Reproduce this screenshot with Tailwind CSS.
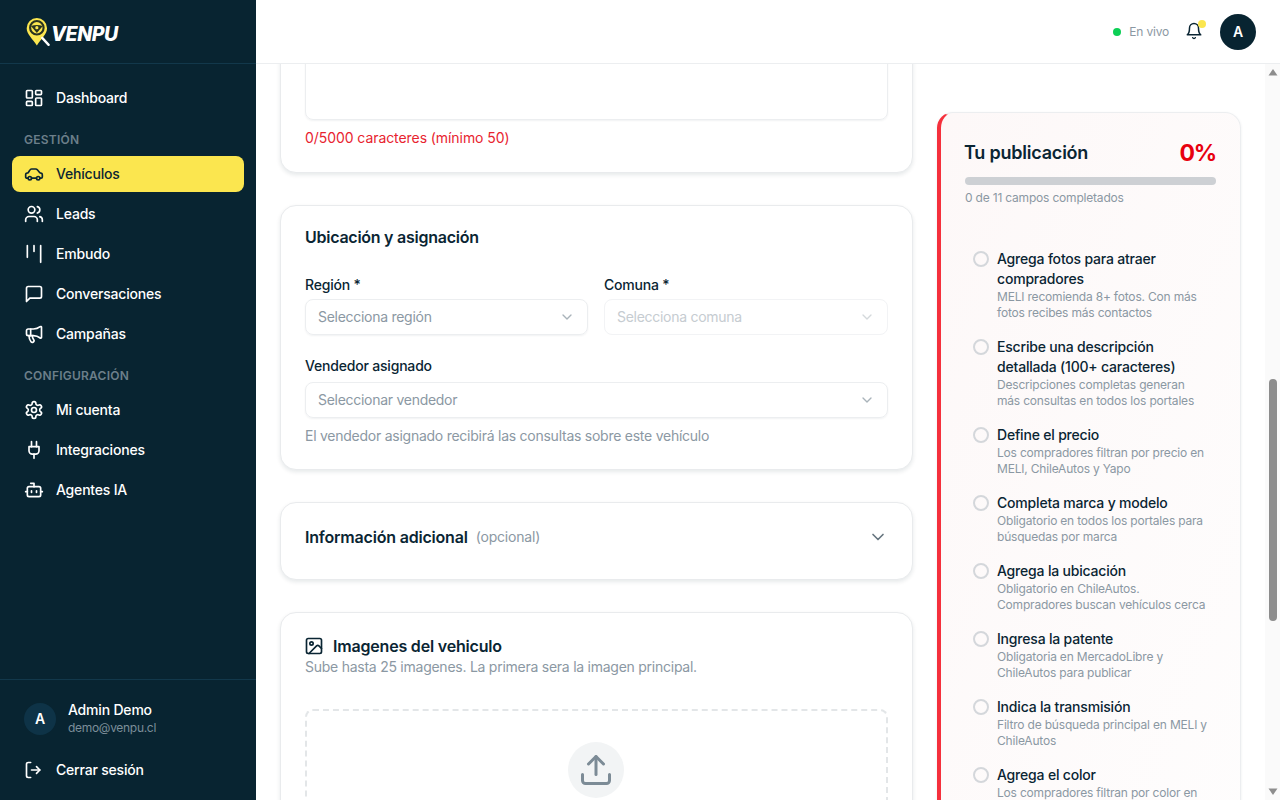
<!DOCTYPE html>
<html lang="es">

<head>
  <meta charset="UTF-8">
  <meta name="viewport" content="width=device-width, initial-scale=1.0">
  <title>Venpu - Nuevo vehiculo</title>
  <script src="https://cdn.jsdelivr.net/npm/@tailwindcss/browser@4"></script>
</head>

<body>
  <div class="flex h-[800px] w-[1280px] overflow-hidden bg-white font-['Inter',sans-serif] tracking-[-0.012em] text-[#0a2533]">

    <!-- sidebar -->
    <aside class="flex h-full w-64 shrink-0 flex-col bg-[#082431] text-white">
      <div class="flex h-16 shrink-0 items-center border-b border-[#12384b] pl-[26px]">
        <svg class="mt-[1px] h-[30px] w-[26px]" viewBox="0 0 24 28" fill="none">
          <path d="M10 1a9.500 9.500 0 0 1 9.500 9.500c0 5.500-5.500 10-9.500 16C6 20.500 .5 16 .5 10.500A9.500 9.500 0 0 1 10 1z" fill="#fbe64f" />
          <circle cx="10" cy="10" r="6.300" stroke="#2a3320" stroke-width="2" />
          <path d="M4.500 8.500c3.500-1.300 7.500-1.300 11 0L10 15z" fill="#2a3320" />
          <circle cx="10" cy="10" r="1.500" fill="#fbe64f" />
          <path d="M15 19.500l6 6.500" stroke="#fff" stroke-width="2.200" stroke-linecap="round" />
        </svg>
        <span class="mt-[7px] -ml-[1px] text-[19.5px] font-extrabold italic leading-none tracking-[-0.02em] text-white">VENPU</span>
      </div>

      <nav class="flex flex-1 flex-col px-3 pt-4 text-sm font-medium">
        <a class="flex h-9 items-center gap-3 rounded-lg px-3">
          <svg class="h-5 w-5" viewBox="0 0 24 24" fill="none" stroke="currentColor" stroke-width="2" stroke-linecap="round" stroke-linejoin="round"><rect x="3" y="3" width="7" height="9" rx="1" /><rect x="14" y="3" width="7" height="5" rx="1" /><rect x="14" y="12" width="7" height="9" rx="1" /><rect x="3" y="16" width="7" height="5" rx="1" /></svg>
          Dashboard
        </a>

        <p class="mt-4 mb-2 px-3 text-xs leading-4 font-semibold tracking-[0.02em] text-[#6c7f8a]">GESTIÓN</p>
        <div class="flex flex-col gap-1">
          <a class="flex h-9 items-center gap-3 rounded-lg bg-[#fbe64f] px-3 text-[#0a2533]">
            <svg class="h-5 w-5" viewBox="0 0 24 24" fill="none" stroke="currentColor" stroke-width="2" stroke-linecap="round" stroke-linejoin="round"><circle cx="7" cy="17" r="2" /><circle cx="17" cy="17" r="2" /><path d="M5 17H3.500C2.700 17 2 16.300 2 15.500v-3c0-.8.6-1.400 1.300-1.500L5 10.500l2-3.200C7.400 6.500 8.200 6 9 6h5c.8 0 1.500.3 2 .9l3 3.600 1.500.4c.9.2 1.500 1 1.500 1.900v2.700c0 .8-.7 1.500-1.500 1.500H19M9 17h6" /></svg>
            Vehículos
          </a>
          <a class="flex h-9 items-center gap-3 rounded-lg px-3">
            <svg class="h-5 w-5" viewBox="0 0 24 24" fill="none" stroke="currentColor" stroke-width="2" stroke-linecap="round" stroke-linejoin="round"><path d="M16 21v-2a4 4 0 0 0-4-4H6a4 4 0 0 0-4 4v2" /><circle cx="9" cy="7" r="4" /><path d="M22 21v-2a4 4 0 0 0-3-3.870" /><path d="M16 3.130a4 4 0 0 1 0 7.750" /></svg>
            Leads
          </a>
          <a class="flex h-9 items-center gap-3 rounded-lg px-3">
            <svg class="h-5 w-5" viewBox="0 0 24 24" fill="none" stroke="currentColor" stroke-width="2" stroke-linecap="round" stroke-linejoin="round"><path d="M4 2v14" /><path d="M12 2v7" /><path d="M20 2v20" /></svg>
            Embudo
          </a>
          <a class="flex h-9 items-center gap-3 rounded-lg px-3">
            <svg class="h-5 w-5" viewBox="0 0 24 24" fill="none" stroke="currentColor" stroke-width="2" stroke-linecap="round" stroke-linejoin="round"><path d="M21 15a2 2 0 0 1-2 2H7l-4 4V5a2 2 0 0 1 2-2h14a2 2 0 0 1 2 2z" /></svg>
            Conversaciones
          </a>
          <a class="flex h-9 items-center gap-3 rounded-lg px-3">
            <svg class="h-5 w-5" viewBox="0 0 24 24" fill="none" stroke="currentColor" stroke-width="2" stroke-linecap="round" stroke-linejoin="round"><path d="M11 6a13 13 0 0 0 8.400-2.800A1 1 0 0 1 21 4v12a1 1 0 0 1-1.600.8A13 13 0 0 0 11 14H5a2 2 0 0 1-2-2V8a2 2 0 0 1 2-2z" /><path d="M6 14a12 12 0 0 0 2.400 7.200 2 2 0 0 0 3.200-2.400A8 8 0 0 1 10 14" /><path d="M8 6v8" /></svg>
            Campañas
          </a>
        </div>

        <p class="mt-4 mb-2 px-3 text-xs leading-4 font-semibold tracking-[0.02em] text-[#6c7f8a]">CONFIGURACIÓN</p>
        <div class="flex flex-col gap-1">
          <a class="flex h-9 items-center gap-3 rounded-lg px-3">
            <svg class="h-5 w-5" viewBox="0 0 24 24" fill="none" stroke="currentColor" stroke-width="2" stroke-linecap="round" stroke-linejoin="round"><path d="M12.220 2h-.44a2 2 0 0 0-2 2v.18a2 2 0 0 1-1 1.730l-.43.25a2 2 0 0 1-2 0l-.15-.08a2 2 0 0 0-2.730.73l-.22.38a2 2 0 0 0 .73 2.730l.15.1a2 2 0 0 1 1 1.720v.51a2 2 0 0 1-1 1.740l-.15.09a2 2 0 0 0-.73 2.730l.22.38a2 2 0 0 0 2.730.73l.15-.08a2 2 0 0 1 2 0l.43.25a2 2 0 0 1 1 1.730V20a2 2 0 0 0 2 2h.44a2 2 0 0 0 2-2v-.18a2 2 0 0 1 1-1.730l.43-.25a2 2 0 0 1 2 0l.15.08a2 2 0 0 0 2.730-.73l.22-.39a2 2 0 0 0-.73-2.730l-.15-.08a2 2 0 0 1-1-1.740v-.5a2 2 0 0 1 1-1.740l.15-.09a2 2 0 0 0 .73-2.730l-.22-.38a2 2 0 0 0-2.730-.73l-.15.08a2 2 0 0 1-2 0l-.43-.25a2 2 0 0 1-1-1.730V4a2 2 0 0 0-2-2z" /><circle cx="12" cy="12" r="3" /></svg>
            Mi cuenta
          </a>
          <a class="flex h-9 items-center gap-3 rounded-lg px-3">
            <svg class="h-5 w-5" viewBox="0 0 24 24" fill="none" stroke="currentColor" stroke-width="2" stroke-linecap="round" stroke-linejoin="round"><path d="M12 22v-5" /><path d="M9 8V2" /><path d="M15 8V2" /><path d="M18 8v5a4 4 0 0 1-4 4h-4a4 4 0 0 1-4-4V8Z" /></svg>
            Integraciones
          </a>
          <a class="flex h-9 items-center gap-3 rounded-lg px-3">
            <svg class="h-5 w-5" viewBox="0 0 24 24" fill="none" stroke="currentColor" stroke-width="2" stroke-linecap="round" stroke-linejoin="round"><path d="M12 8V4H8" /><rect x="4" y="8" width="16" height="12" rx="2" /><path d="M2 14h2" /><path d="M20 14h2" /><path d="M15 13v2" /><path d="M9 13v2" /></svg>
            Agentes IA
          </a>
        </div>
      </nav>

      <div class="h-[121px] shrink-0 border-t border-[#12384b] px-6 pt-[21px]">
        <div class="flex items-center gap-3">
          <div class="flex h-8 w-8 items-center justify-center rounded-full bg-[#0e3347] text-sm font-semibold">A</div>
          <div class="-mt-[1px]">
            <p class="text-sm leading-5 font-medium">Admin Demo</p>
            <p class="text-xs leading-4 tracking-[-0.025em] text-[#7c8e99]">demo@venpu.cl</p>
          </div>
        </div>
        <a class="mt-4 flex h-9 items-center gap-3 text-sm font-medium">
          <svg class="h-5 w-5" viewBox="0 0 24 24" fill="none" stroke="currentColor" stroke-width="2" stroke-linecap="round" stroke-linejoin="round"><path d="M8 21H5a2 2 0 0 1-2-2V5a2 2 0 0 1 2-2h3" /><path d="m15 16 4-4-4-4" /><path d="M19 12H9" /></svg>
          Cerrar sesión
        </a>
      </div>
    </aside>

    <!-- right side -->
    <div class="flex h-full min-w-0 flex-1 flex-col">
      <header class="flex h-16 shrink-0 items-center justify-end border-b border-[#eceef0] bg-white pr-6">
        <span class="h-2 w-2 rounded-full bg-[#0ccf55]"></span>
        <span class="ml-2 text-xs text-[#8b98a3]">En vivo</span>
        <div class="relative ml-4 h-5 w-5">
          <svg class="h-[18px] w-[18px]" viewBox="0 0 24 24" fill="none" stroke="#0a2533" stroke-width="2" stroke-linecap="round" stroke-linejoin="round"><path d="M6 8a6 6 0 0 1 12 0c0 7 3 9 3 9H3s3-2 3-9" /><path d="M10.300 21a1.940 1.940 0 0 0 3.400 0" /></svg>
          <span class="absolute -top-[2px] right-[-1px] h-2 w-2 rounded-full bg-[#fbe64f]"></span>
        </div>
        <div class="ml-[15px] flex h-9 w-9 items-center justify-center rounded-full bg-[#082431] text-sm font-semibold text-white">A</div>
      </header>

      <div class="flex min-h-0 flex-1 overflow-hidden">
        <main class="flex min-w-0 flex-1 gap-6 overflow-hidden pl-6">

          <div class="flex w-[633px] shrink-0 flex-col gap-8">
            <!-- descripcion (cut by the scroll) -->
            <section class="-mt-[41px] shrink-0 rounded-2xl border border-[#e9ebed] bg-white px-6 pb-6 shadow-[0_2px_4px_rgba(10,37,51,0.1)]">
              <div class="h-[96px] rounded-lg border border-[#eceef0] shadow-[0_1px_2px_rgba(10,37,51,0.06)]"></div>
              <p class="mt-2 text-sm leading-5 tracking-[-0.005em] text-[#e8232f]">0/5000 caracteres (mínimo 50)</p>
            </section>

            <section class="shrink-0 rounded-2xl border border-[#e9ebed] bg-white px-6 pt-[19px] pb-[23px] shadow-[0_2px_4px_rgba(10,37,51,0.1)]">
              <h2 class="text-base leading-6 font-semibold tracking-[-0.016em]">Ubicación y asignación</h2>
              <div class="mt-[26px] grid grid-cols-[283px_1fr] gap-4">
                <div>
                  <label class="block text-sm leading-5 font-medium">Región *</label>
                  <div class="mt-1 flex h-9 items-center justify-between rounded-lg border border-[#eceef0] px-3 text-sm tracking-[-0.02em] text-[#8b98a3] shadow-[0_1px_2px_rgba(10,37,51,0.06)]">
                    Selecciona región
                    <svg class="h-4 w-4 text-[#a9b3ba]" viewBox="0 0 24 24" fill="none" stroke="currentColor" stroke-width="2" stroke-linecap="round" stroke-linejoin="round"><path d="m6 9 6 6 6-6" /></svg>
                  </div>
                </div>
                <div>
                  <label class="block text-sm leading-5 font-medium">Comuna *</label>
                  <div class="mt-1 flex h-9 items-center justify-between rounded-lg border border-[#f2f3f5] px-3 text-sm tracking-[-0.02em] text-[#c6ccd1]">
                    Selecciona comuna
                    <svg class="h-4 w-4 text-[#d4d9dc]" viewBox="0 0 24 24" fill="none" stroke="currentColor" stroke-width="2" stroke-linecap="round" stroke-linejoin="round"><path d="m6 9 6 6 6-6" /></svg>
                  </div>
                </div>
              </div>
              <label class="mt-[21px] block text-sm leading-5 font-medium">Vendedor asignado</label>
              <div class="mt-1.5 flex h-9 items-center justify-between rounded-lg border border-[#eceef0] px-3 text-sm tracking-[-0.02em] text-[#8b98a3] shadow-[0_1px_2px_rgba(10,37,51,0.06)]">
                Seleccionar vendedor
                <svg class="h-4 w-4 text-[#a9b3ba]" viewBox="0 0 24 24" fill="none" stroke="currentColor" stroke-width="2" stroke-linecap="round" stroke-linejoin="round"><path d="m6 9 6 6 6-6" /></svg>
              </div>
              <p class="mt-2 text-sm leading-5 tracking-[-0.018em] text-[#8b98a3]">El vendedor asignado recibirá las consultas sobre este vehículo</p>
            </section>

            <section class="flex h-[78px] shrink-0 items-center justify-between rounded-2xl border border-[#e9ebed] bg-white px-6 pb-2 shadow-[0_2px_4px_rgba(10,37,51,0.1)]">
              <div class="flex items-center gap-2">
                <h2 class="text-base leading-6 font-semibold">Información adicional</h2>
                <span class="text-sm text-[#8b98a3]">(opcional)</span>
              </div>
              <svg class="h-5 w-5 text-[#66757f]" viewBox="0 0 24 24" fill="none" stroke="currentColor" stroke-width="2" stroke-linecap="round" stroke-linejoin="round"><path d="m6 9 6 6 6-6" /></svg>
            </section>

            <section class="shrink-0 rounded-2xl border border-[#e9ebed] bg-white px-6 pt-[21px] pb-10 shadow-[0_2px_4px_rgba(10,37,51,0.1)]">
              <div class="flex items-center gap-[9px]">
                <svg class="h-5 w-5 -ml-[1px]" viewBox="0 0 24 24" fill="none" stroke="currentColor" stroke-width="2" stroke-linecap="round" stroke-linejoin="round"><rect x="3" y="3" width="18" height="18" rx="2" /><circle cx="9" cy="9" r="2" /><path d="m21 15-3.086-3.086a2 2 0 0 0-2.828 0L6 21" /></svg>
                <h2 class="text-base leading-6 font-semibold">Imagenes del vehiculo</h2>
              </div>
              <p class="-mt-[1px] text-sm leading-5 tracking-[-0.018em] text-[#8b98a3]">Sube hasta 25 imagenes. La primera sera la imagen principal.</p>
              <div class="mt-8 flex h-[200px] justify-center rounded-lg border-2 border-dashed border-[#e3e6e8] pt-[31px] pr-[1px]">
                <div class="flex h-14 w-14 items-center justify-center rounded-full bg-[#f2f4f5]">
                  <svg class="h-9 w-9 text-[#7c8b96]" viewBox="0 0 24 24" fill="none" stroke="currentColor" stroke-width="2" stroke-linecap="round" stroke-linejoin="round"><path d="M21 15v4a2 2 0 0 1-2 2H5a2 2 0 0 1-2-2v-4" /><polyline points="17 8 12 3 7 8" /><line x1="12" y1="3" x2="12" y2="15" /></svg>
                </div>
              </div>
            </section>
          </div>

          <!-- progreso -->
          <section class="mt-12 h-[800px] w-[304px] shrink-0 rounded-2xl border border-l-4 border-[#eceef0] border-l-[#f5303c] bg-gradient-to-br from-[#fdf8f8] to-[#fefdfd] px-6 pt-6 shadow-[0_1px_3px_rgba(10,37,51,0.08)]">
            <div class="flex items-center justify-between">
              <h2 class="-ml-[1px] text-lg leading-7 font-semibold tracking-[-0.012em]">Tu publicación</h2>
              <span class="text-[23px] leading-8 font-bold tracking-[-0.05em] text-[#e8000f]">0%</span>
            </div>
            <div class="mt-2 h-2 rounded-full bg-[#cdd0d4]"></div>
            <p class="mt-[5px] text-xs leading-4 text-[#8b98a3]">0 de 11 campos completados</p>

            <ul class="mt-[43px] flex flex-col gap-4 px-2">
              <li class="flex gap-2">
                <span class="mt-[2px] h-4 w-4 shrink-0 rounded-full border-2 border-[#d4d7db]"></span>
                <div>
                  <p class="text-sm leading-5 font-medium">Agrega fotos para atraer compradores</p>
                  <p class="text-xs leading-4 text-[#8b98a3]">MELI recomienda 8+ fotos. Con más fotos recibes más contactos</p>
                </div>
              </li>
              <li class="flex gap-2">
                <span class="mt-[2px] h-4 w-4 shrink-0 rounded-full border-2 border-[#d4d7db]"></span>
                <div>
                  <p class="text-sm leading-5 font-medium">Escribe una descripción detallada (100+ caracteres)</p>
                  <p class="text-xs leading-4 text-[#8b98a3]">Descripciones completas generan más consultas en todos los portales</p>
                </div>
              </li>
              <li class="flex gap-2">
                <span class="mt-[2px] h-4 w-4 shrink-0 rounded-full border-2 border-[#d4d7db]"></span>
                <div>
                  <p class="text-sm leading-5 font-medium">Define el precio</p>
                  <p class="text-xs leading-4 text-[#8b98a3]">Los compradores filtran por precio en MELI, ChileAutos y Yapo</p>
                </div>
              </li>
              <li class="flex gap-2">
                <span class="mt-[2px] h-4 w-4 shrink-0 rounded-full border-2 border-[#d4d7db]"></span>
                <div>
                  <p class="text-sm leading-5 font-medium">Completa marca y modelo</p>
                  <p class="text-xs leading-4 text-[#8b98a3]">Obligatorio en todos los portales para búsquedas por marca</p>
                </div>
              </li>
              <li class="flex gap-2">
                <span class="mt-[2px] h-4 w-4 shrink-0 rounded-full border-2 border-[#d4d7db]"></span>
                <div>
                  <p class="text-sm leading-5 font-medium">Agrega la ubicación</p>
                  <p class="text-xs leading-4 text-[#8b98a3]">Obligatorio en ChileAutos. Compradores buscan vehículos cerca</p>
                </div>
              </li>
              <li class="flex gap-2">
                <span class="mt-[2px] h-4 w-4 shrink-0 rounded-full border-2 border-[#d4d7db]"></span>
                <div>
                  <p class="text-sm leading-5 font-medium">Ingresa la patente</p>
                  <p class="text-xs leading-4 text-[#8b98a3]">Obligatoria en MercadoLibre y ChileAutos para publicar</p>
                </div>
              </li>
              <li class="flex gap-2">
                <span class="mt-[2px] h-4 w-4 shrink-0 rounded-full border-2 border-[#d4d7db]"></span>
                <div>
                  <p class="text-sm leading-5 font-medium">Indica la transmisión</p>
                  <p class="text-xs leading-4 text-[#8b98a3]">Filtro de búsqueda principal en MELI y ChileAutos</p>
                </div>
              </li>
              <li class="flex gap-2">
                <span class="mt-[2px] h-4 w-4 shrink-0 rounded-full border-2 border-[#d4d7db]"></span>
                <div>
                  <p class="text-sm leading-5 font-medium">Agrega el color</p>
                  <p class="text-xs leading-4 text-[#8b98a3]">Los compradores filtran por color en</p>
                </div>
              </li>
            </ul>
          </section>
        </main>

        <!-- scrollbar -->
        <div class="flex w-[15px] shrink-0 flex-col items-center bg-[#fafafa]">
          <svg class="mt-[4px] h-2 w-2.5" viewBox="0 0 10 8"><path d="M5 1 9.500 7.500H.5z" fill="#8d8d8d" /></svg>
          <div class="mt-[303px] h-[242px] w-2 rounded-full bg-[#8d8d8d]"></div>
          <svg class="mt-auto mb-[4px] h-2 w-2.5" viewBox="0 0 10 8"><path d="M5 7 9.500 .5H.5z" fill="#8d8d8d" /></svg>
        </div>
      </div>
    </div>
  </div>
</body>

</html>
